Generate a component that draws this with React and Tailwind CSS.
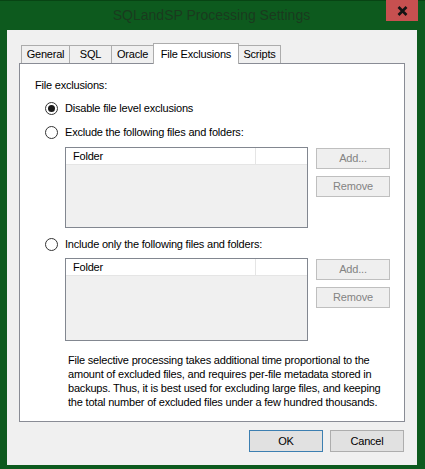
import React from 'react';

const font = { fontFamily: '"Liberation Sans", Arial, sans-serif' };

const Radio = ({ checked, label }) => (
    <div className="flex items-center h-[14px] ml-[10px]">
        <div className="w-[13px] h-[13px] rounded-full border border-[#333333] bg-white flex items-center justify-center shrink-0">
            {checked && <div className="w-[7px] h-[7px] rounded-full bg-[#1a1a1a]" />}
        </div>
        <span className="ml-[7px] whitespace-nowrap">{label}</span>
    </div>
);

const SideButton = ({ children }) => (
    <div className="w-[74px] h-[21px] border border-[#bfbfbf] bg-[#efefef] text-[#838383] flex items-center justify-center">
        {children}
    </div>
);

const FolderList = ({ height }) => (
    <div className="flex ml-[30px]">
        <div className={`w-[243px] ${height} border border-[#828790] bg-[#f0f0f0] flex flex-col`}>
            <div className="h-[17px] bg-white border-b border-[#e5e5e5] flex">
                <div className="w-[190px] border-r border-[#e5e5e5] pl-[7px] flex items-center">Folder</div>
            </div>
        </div>
        <div className="ml-[8px] mt-[1px] flex flex-col gap-[7px]">
            <SideButton>Add...</SideButton>
            <SideButton>Remove</SideButton>
        </div>
    </div>
);

const tabs = [
    { name: 'General', w: 'w-[49px]' },
    { name: 'SQL', w: 'w-[43px]' },
    { name: 'Oracle', w: 'w-[43px]' },
    { name: 'File Exclusions', w: 'w-[86px]', active: true },
    { name: 'Scripts', w: 'w-[43px]' },
];

export default function App() {
    return (
        <div className="w-[425px] h-[469px] bg-[#0d5a1e] border-t border-[#084414] flex flex-col text-[11px] text-black tracking-[-0.2px]" style={font}>
            {/* Title bar */}
            <div className="h-[29px] relative flex items-center justify-center">
                <span className="text-[14px] tracking-normal text-[#1a3a1e] -mt-[1px] ml-[-2px]">SQLandSP Processing Settings</span>
                <div className="absolute right-[7px] top-[-1px] w-[32px] h-[21px] bg-[#c75050] flex items-center justify-center">
                    <svg width="11" height="10" viewBox="0 0 11 10">
                        <path d="M1.5 1 L9.5 9 M9.5 1 L1.5 9" stroke="#141414" strokeWidth="2.6" />
                    </svg>
                </div>
            </div>

            {/* Client area */}
            <div className="flex-1 ml-[7px] mr-[8px] mb-[4px] bg-[#f0f0f0] px-[12px] pt-[13px] flex flex-col">
                {/* Tabs */}
                <div className="flex items-end h-[20px] pl-[1px]">
                    {tabs.map((t) =>
                        t.active ? (
                            <div key={t.name} className={`${t.w} h-[21px] -mb-[1px] -ml-[1px] relative z-10 bg-white border border-b-0 border-[#acacac] flex items-start justify-center pt-[2px]`}>
                                {t.name}
                            </div>
                        ) : (
                            <div key={t.name} className={`${t.w} h-[18px] -ml-[1px] first:ml-[1px] bg-[#f0f0f0] border border-b-0 border-[#acacac] flex items-center justify-center`}>
                                {t.name}
                            </div>
                        )
                    )}
                </div>

                {/* Tab panel */}
                <div className="h-[359px] border border-[#898c95] bg-white flex flex-col pl-[15px]">
                    <div className="mt-[14px] h-[14px] leading-[14px]">File exclusions:</div>
                    <div className="mt-[9px]">
                        <Radio checked label="Disable file level exclusions" />
                    </div>
                    <div className="mt-[10px]">
                        <Radio label="Exclude the following files and folders:" />
                    </div>
                    <div className="mt-[8px]">
                        <FolderList height="h-[81px]" />
                    </div>
                    <div className="mt-[9px]">
                        <Radio label="Include only the following files and folders:" />
                    </div>
                    <div className="mt-[7px]">
                        <FolderList height="h-[83px]" />
                    </div>
                    <div className="mt-[12px] ml-[33px] leading-[14px] whitespace-nowrap">
                        <div>File selective processing takes additional time proportional to the</div>
                        <div>amount of excluded files, and requires per-file metadata stored in</div>
                        <div>backups. Thus, it is best used for excluding large files, and keeping</div>
                        <div>the total number of excluded files under a few hundred thousands.</div>
                    </div>
                </div>

                {/* Dialog buttons */}
                <div className="mt-[8px] flex justify-end gap-[7px] pr-[1px]">
                    <div className="w-[74px] h-[22px] border border-[#3c7fb1] bg-[#e1e1e1] flex items-center justify-center">OK</div>
                    <div className="w-[74px] h-[22px] border border-[#adadad] bg-[#e1e1e1] flex items-center justify-center">Cancel</div>
                </div>
            </div>
        </div>
    );
}
